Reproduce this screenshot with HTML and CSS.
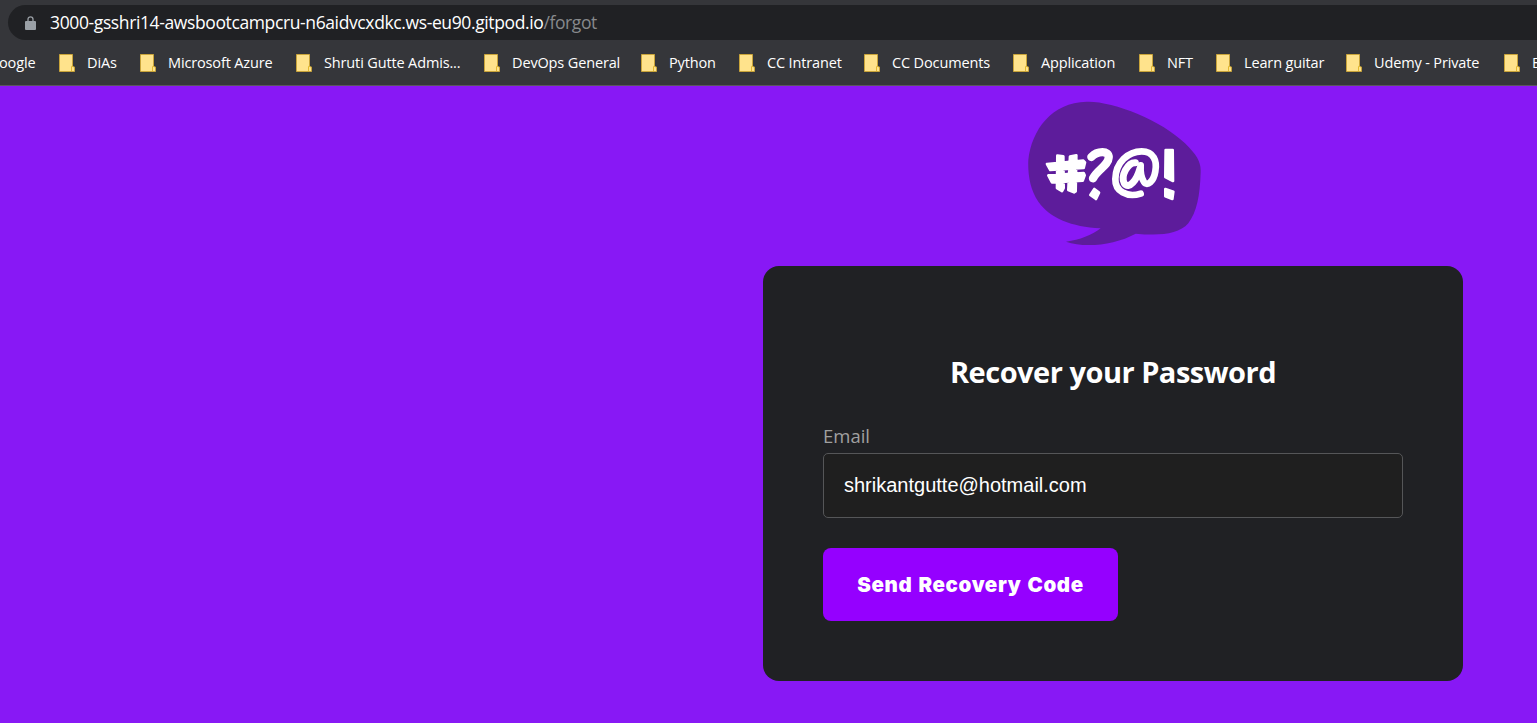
FILE: index.html
```
<!DOCTYPE html>
<html lang="en">
<head>
<meta charset="utf-8">
<title>Recover your Password</title>
<link rel="stylesheet" href="styles.css">
</head>
<body>
<svg class="defs" aria-hidden="true">
  <symbol id="folder" viewBox="0 0 16 18">
    <path d="M.5.5H13.5V12.5L15.5 13V17.5H.5Z" fill="#ffe38c" stroke="#c9a43a"/>
    <path d="M12.5 17V13Q12.5 11.5 14 12.5" fill="none" stroke="#e3b92f"/>
  </symbol>
</svg>
<header class="browser">
  <div class="address">
    <svg class="lock" viewBox="0 0 11 14"><path d="M3 6V3.3a2.5 2.5 0 0 1 5 0V6" fill="none" stroke="#9aa0a6" stroke-width="1.3"/><rect y="5" width="11" height="9" rx="1" fill="#9aa0a6"/></svg>
    <span class="url">3000-gsshri14-awsbootcampcru-n6aidvcxdkc.ws-eu90.gitpod.io<span class="path">/forgot</span></span>
  </div>
  <nav class="bookmarks">
    <span class="mark cut">oogle</span>
    <span class="mark"><svg><use href="#folder"/></svg>DiAs</span>
    <span class="mark"><svg><use href="#folder"/></svg>Microsoft Azure</span>
    <span class="mark"><svg><use href="#folder"/></svg>Shruti Gutte Admis...</span>
    <span class="mark"><svg><use href="#folder"/></svg>DevOps General</span>
    <span class="mark"><svg><use href="#folder"/></svg>Python</span>
    <span class="mark"><svg><use href="#folder"/></svg>CC Intranet</span>
    <span class="mark"><svg><use href="#folder"/></svg>CC Documents</span>
    <span class="mark"><svg><use href="#folder"/></svg>Application</span>
    <span class="mark"><svg><use href="#folder"/></svg>NFT</span>
    <span class="mark"><svg><use href="#folder"/></svg>Learn guitar</span>
    <span class="mark"><svg><use href="#folder"/></svg>Udemy - Private</span>
    <span class="mark"><svg><use href="#folder"/></svg>E</span>
  </nav>
</header>
<main class="page">
  <section class="recover">
    <svg class="logo" viewBox="39 33 519 435">
      <path fill="#5d1c9b" d="M215 35C290 32 440 90 510 160C545 195 558 215 557 245C555 320 545 365 520 400C490 435 430 437 362 431C300 465 210 475 153 455C195 450 230 435 257 415C170 410 105 385 70 335C45 300 38 250 40 210C50 120 110 37 215 35Z"/>
      <g fill="#fff" stroke="#fff" stroke-width="8" stroke-linejoin="round">
        <path d="M127 197L145 199L146 294L141 303L126 294ZM165 200L184 196L182 304L177 307L160 300ZM96 222L205 212L210 217L206 234L106 240ZM100 256L206 249L209 256L203 272L111 277Z"/>
        <path d="M452 180L473 180L474 273L451 261ZM451 297L475 305L472 327L451 319ZM238 297L252 308L243 327L226 315Z"/>
      </g>
      <g fill="none" stroke="#fff" stroke-linejoin="round" stroke-linecap="round">
        <path d="M229 201C246 183 283 180 281 203C280 226 247 239 234 265" stroke-width="25"/>
        <path d="M377 311C335 324 300 303 301 267C302 217 340 184 380 184C416 184 427 213 421 244C416 274 397 291 387 276C378 262 376 243 377 226" stroke-width="20"/>
        <path d="M361 218C338 217 316 258 328 280C342 301 366 269 375 235" stroke-width="21"/>
      </g>
    </svg>
    <form class="card">
      <h1>Recover your Password</h1>
      <label for="email">Email</label>
      <input id="email" type="text" value="shrikantgutte@hotmail.com">
      <button type="button">Send Recovery Code</button>
    </form>
  </section>
</main>
</body>
</html>
```
FILE: styles.css
```
* { box-sizing: border-box; }
body {
  margin: 0;
  height: 723px;
  overflow: hidden;
  display: flex;
  flex-direction: column;
  background: #8818f5;
  color: #fff;
  font-family: "Open Sans", "Noto Sans", sans-serif;
}
.defs { display: none; }
.browser {
  height: 86px;
  flex: none;
  padding-top: 5px;
  background: #35363a;
  border-bottom: 1px solid #5b5560;
}
.address {
  height: 35px;
  margin-left: 8px;
  padding-left: 17px;
  display: flex;
  align-items: center;
  background: #202124;
  border-radius: 18px 0 0 18px;
}
.lock { width: 11px; height: 14px; margin-right: 14px; }
.url { padding-bottom: 2px; font-size: 17.5px; letter-spacing: -0.38px; white-space: nowrap; }
.path { color: #87898c; }
.bookmarks {
  height: 45px;
  display: grid;
  grid-template-columns: 59px 81px 156px 188px 157px 98px 125px 149px 126px 77px 130px 158px 33px;
  overflow: hidden;
}
.mark {
  display: flex;
  align-items: center;
  gap: 12px;
  font-size: 14.5px;
  letter-spacing: -0.14px;
  white-space: nowrap;
  overflow: hidden;
}
.cut { margin-left: -1px; }
.mark svg { width: 16px; height: 18px; flex: none; }
.page { flex: 1; }
.recover {
  width: 700px;
  margin-left: 763px;
  padding-top: 15px;
  display: flex;
  flex-direction: column;
  align-items: center;
}
.logo { width: 173px; height: 145px; margin: 0 0 20px 2px; }
.card {
  width: 700px;
  height: 415px;
  padding: 85px 60px 60px;
  display: flex;
  flex-direction: column;
  align-items: flex-start;
  background: #202124;
  border-radius: 16px;
}
h1 {
  margin: 0 0 32px;
  align-self: center;
  font-size: 29px;
  line-height: 41px;
  letter-spacing: -0.5px;
  white-space: nowrap;
}
label {
  margin-bottom: 5px;
  font-size: 18.5px;
  line-height: 24px;
  color: #a0a0a0;
}
input {
  width: 580px;
  height: 65px;
  margin-bottom: 30px;
  padding: 0 20px;
  background: #1f1f1f;
  border: 1px solid #555658;
  border-radius: 5px;
  color: #fff;
  font: 20px "Liberation Sans", sans-serif;
}
button {
  width: 295px;
  height: 73px;
  padding: 0;
  border: 0;
  border-radius: 8px;
  background: #9500ff;
  color: #fff;
  font: 900 20.5px "Inter", sans-serif;
  letter-spacing: 0.6px;
  word-spacing: 1.5px;
  white-space: nowrap;
}
```
